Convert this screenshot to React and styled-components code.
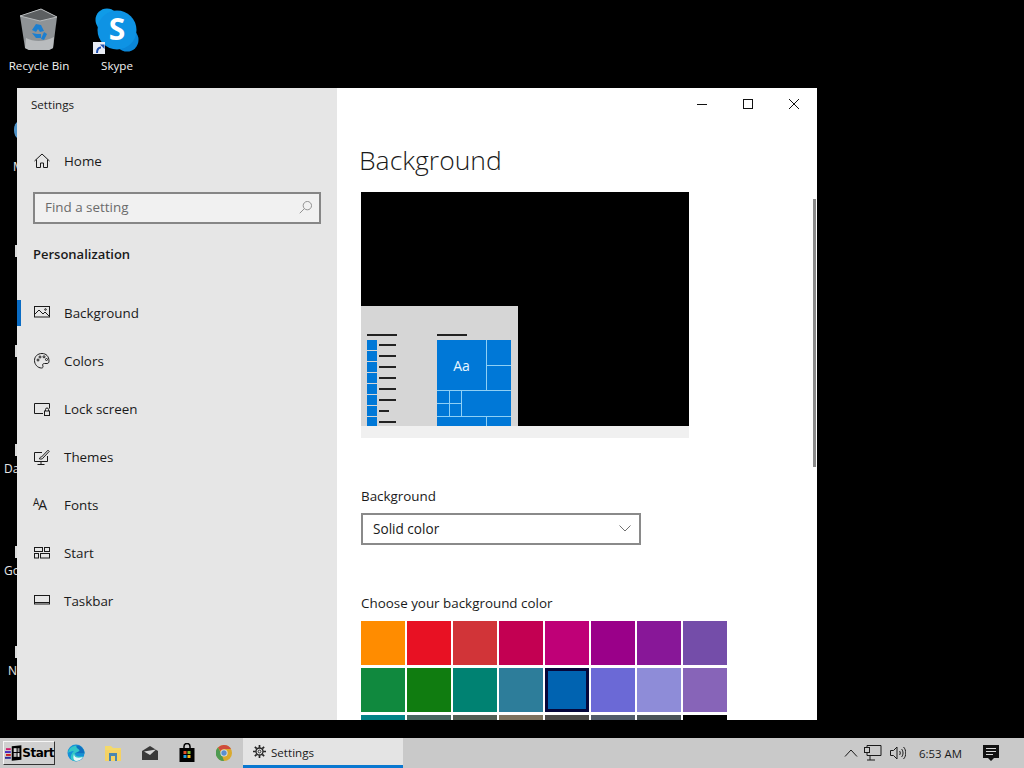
import React from 'react';
import styled, { createGlobalStyle } from 'styled-components';

const GlobalStyle = createGlobalStyle`
    html, body { margin: 0; padding: 0; background: #000; }
    body { font-family: "Open Sans", "Noto Sans", sans-serif; overflow: hidden; }
`;

const navItems = [
    { label: 'Background', icon: 'background', active: true },
    { label: 'Colors', icon: 'colors' },
    { label: 'Lock screen', icon: 'lock' },
    { label: 'Themes', icon: 'themes' },
    { label: 'Fonts', icon: 'fonts' },
    { label: 'Start', icon: 'start' },
    { label: 'Taskbar', icon: 'taskbar' },
];

const swatches = [
    '#ff8c00', '#e81123', '#d13438', '#c30052', '#bf0077', '#9a0089', '#881798', '#744da9',
    '#10893e', '#107c10', '#008272', '#2d7d9a', '#0063b1', '#6b69d6', '#8e8cd8', '#8764b8',
    '#038387', '#486860', '#525e54', '#7e735f', '#4c4a48', '#515c6b', '#4a5459', '#000000',
];

const hiddenIcons = [
    { top: 245, label: '' },
    { top: 345, label: '' },
    { top: 444, label: 'Da' },
    { top: 546, label: 'Go' },
    { top: 646, label: 'N' },
];

function NavIcon({ name }) {
    const common = { width: 18, height: 18, viewBox: '0 0 18 18', fill: 'none', stroke: '#1a1a1a', strokeWidth: 1 };
    if (name === 'background') return (
        <svg {...common}>
            <rect x="1.5" y="2.5" width="15" height="10.5" />
            <path d="M2 10l4-4 4 4 2-2 4 4" />
            <circle cx="12.5" cy="5.5" r=".8" />
        </svg>
    );
    if (name === 'colors') return (
        <svg {...common}>
            <path d="M9 1.5c-4.4 0-7.5 3-7.5 7s3.200 7.500 7 7.500c1.500 0 1.800-1 1.300-2.200-.6-1.400.2-2.300 1.700-2.300h2.500c1.300 0 2-.9 2-2.300C16 4.200 13 1.500 9 1.500z" />
            <circle cx="5" cy="8" r="1" />
            <circle cx="7" cy="5" r="1" />
            <circle cx="11" cy="4.800" r="1" />
            <circle cx="13.500" cy="7.500" r="1" />
        </svg>
    );
    if (name === 'lock') return (
        <svg {...common}>
            <path d="M10 13.500H1.500v-10h15v5" />
            <rect x="11.500" y="11" width="5" height="4.500" />
            <path d="M12.500 11V9.500a1.500 1.500 0 0 1 3 0V11" />
        </svg>
    );
    if (name === 'themes') return (
        <svg {...common}>
            <path d="M9 4.500H1.500v9h13V8" />
            <path d="M8 14v2.500M4.500 16.500h7" />
            <path d="M6.500 11c.2-1.500 1-2 2-2L15 2.200l1.200 1.200L10 10c-.3 1-1.800 1.200-3.500 1z" />
        </svg>
    );
    if (name === 'fonts') return (
        <FontsGlyph>
            <small>A</small>
            <span>A</span>
        </FontsGlyph>
    );
    if (name === 'start') return (
        <svg {...common}>
            <rect x="1.500" y="3.500" width="8" height="4" />
            <rect x="11.500" y="3.500" width="5" height="4" />
            <rect x="1.500" y="9.500" width="4" height="4.500" />
            <rect x="7.500" y="9.500" width="9" height="4.500" />
        </svg>
    );
    return (
        <svg {...common}>
            <rect x="1.500" y="3.500" width="15" height="8.500" />
            <path d="M1.500 10.500h15" />
        </svg>
    );
}

function SkypeIcon() {
    return (
        <svg width="44" height="44" viewBox="0 0 44 44">
            <circle cx="12" cy="12" r="11.500" fill="#0f9be8" />
            <circle cx="32" cy="32" r="11.500" fill="#0a86d8" />
            <circle cx="22" cy="22" r="19.500" fill="#0e93e4" />
            <text x="22" y="32" textAnchor="middle" fontFamily="Open Sans, sans-serif" fontWeight="700" fontSize="30" fill="#fff">S</text>
        </svg>
    );
}

function RecycleIcon() {
    return (
        <svg width="40" height="44" viewBox="0 0 40 44">
            <path d="M1 8L22 1l16 8-4 31-4 2H10l-4-2z" fill="#8f9396" />
            <path d="M1 8L22 1l16 8-17 4z" fill="#5c5f61" stroke="#b8bbbd" strokeWidth="1" />
            <path d="M7 30c8 4 18 4 28-1l-1 11-4 2H10l-4-2z" fill="#b9bcbe" />
            <path d="M13 22l4-6 5 1 3 6-4 1-2-3-2 3z M13 25l4 5h5v-4h-4z M25 24l3 2-3 6-3-1z" fill="#1c7fd0" />
        </svg>
    );
}

function ShortcutBadge() {
    return (
        <Badge>
            <svg width="11" height="11" viewBox="0 0 11 11" fill="none">
                <path d="M3 10c0-4 1-5.500 4-5.500" stroke="#1d4fb0" strokeWidth="2" />
                <path d="M6 1.500h4.500V6z" fill="#1d4fb0" />
            </svg>
        </Badge>
    );
}

function StartFlag() {
    return (
        <svg width="19" height="20" viewBox="0 0 18 18">
            <path d="M7 2l10-1v15l-10 1z" fill="#000" />
            <rect x="9" y="4" width="3" height="4" fill="#d8d8d8" />
            <rect x="13" y="4" width="2" height="4" fill="#9a9a9a" />
            <rect x="9" y="9" width="3" height="4" fill="#bbb" />
            <rect x="13" y="9" width="2" height="4" fill="#e8e8e8" />
            <rect x="1" y="4" width="5" height="2" fill="#d01c6a" />
            <rect x="0" y="7" width="6" height="2" fill="#4a2bc0" />
            <rect x="1" y="10" width="5" height="2" fill="#d01c1c" />
            <rect x="0" y="13" width="6" height="2" fill="#2a2a9a" />
        </svg>
    );
}

function EdgeIcon() {
    return (
        <svg width="18" height="18" viewBox="0 0 18 18">
            <circle cx="9" cy="9" r="8.500" fill="#1490d8" />
            <path d="M1 9C2 3 8 .500 13 2.500c3 1.200 4.500 4 4.500 7H8c0 2.500 3 4 8 2.500-2 5-8 6-11 4C2.500 14.500 4 9.500 7 7 4 7 2 8 1 9z" fill="#33c6c8" />
            <path d="M7.500 9.500h10c0-3-2-8-8-8-1 3 3 3 3 5.500z" fill="#0f6fc0" />
            <path d="M7 10c0 3 3 5 9 3-2 3-5 4-7 4-3-1-3-4-2-7z" fill="#e6f6f8" />
        </svg>
    );
}

function FolderIcon() {
    return (
        <svg width="18" height="18" viewBox="0 0 18 18">
            <path d="M1 2h6l2 2h8v3H1z" fill="#f4d96a" />
            <rect x="1" y="6" width="16" height="11" fill="#f5d265" />
            <path d="M5 9h8v8h-2v-5H7v5H5z" fill="#4a86b0" />
        </svg>
    );
}

function MailIcon() {
    return (
        <svg width="18" height="14" viewBox="0 0 18 14">
            <path d="M1 5L9 0l8 5v9H1z" fill="#3a3a3a" />
            <path d="M3 5.500L15 3.500 9 9z" fill="#d6d6d6" />
        </svg>
    );
}

function StoreIcon() {
    return (
        <svg width="18" height="20" viewBox="0 0 18 20" fill="none">
            <path d="M6 6V3.500a3 3 0 0 1 6 0V6" stroke="#000" strokeWidth="1.500" />
            <rect x="1.500" y="5" width="15" height="14" fill="#000" />
            <rect x="5.500" y="8" width="3" height="3" fill="#e2502a" />
            <rect x="9.500" y="8" width="3" height="3" fill="#7dbb2e" />
            <rect x="5.500" y="12" width="3" height="3" fill="#1d9fe0" />
            <rect x="9.500" y="12" width="3" height="3" fill="#f5b81c" />
        </svg>
    );
}

function ChromeIcon() {
    return (
        <svg width="16" height="16" viewBox="0 0 16 16">
            <circle cx="8" cy="8" r="8" fill="#d9a92e" />
            <path d="M8 0a8 8 0 0 1 7 4H8a4 4 0 0 0-3.500 2L2 2.500A8 8 0 0 1 8 0z" fill="#cf4b3d" />
            <path d="M2 2.500L5.500 9 8 16A8 8 0 0 1 2 2.500z" fill="#4e9a52" />
            <circle cx="8" cy="8" r="3.600" fill="#e4e4e4" />
            <circle cx="8" cy="8" r="2.700" fill="#5b8fd0" />
        </svg>
    );
}

function GearIcon() {
    return (
        <svg width="13" height="13" viewBox="0 0 14 14" fill="none" stroke="#262626">
            <circle cx="7" cy="7" r="3.800" strokeWidth="1.500" />
            <circle cx="7" cy="7" r="1.500" strokeWidth="1" />
            <path d="M7 0v3M7 11v3M0 7h3M11 7h3M2 2l2 2M10 10l2 2M12 2l-2 2M4 10l-2 2" strokeWidth="1.800" />
        </svg>
    );
}

export default function App() {
    return (
        <Page>
            <GlobalStyle />
            <Desktop>
                <DesktopIcon $left={0} $top={8}>
                    <RecycleIcon />
                    <DesktopLabel>Recycle Bin</DesktopLabel>
                </DesktopIcon>
                <DesktopIcon $left={78} $top={8}>
                    <SkypeIcon />
                    <ShortcutBadge />
                    <DesktopLabel>Skype</DesktopLabel>
                </DesktopIcon>

                <BlueFragment />
                <HiddenLabel $top={159} $left={13}>M</HiddenLabel>
                {hiddenIcons.map((item) => (
                    <React.Fragment key={item.top}>
                        <Sliver $top={item.top} />
                        {item.label && (
                            <HiddenLabel $top={item.top + 17} $left={item.label === 'N' ? 8 : 4}>{item.label}</HiddenLabel>
                        )}
                    </React.Fragment>
                ))}

                <Window>
                    <Sidebar>
                        <WindowTitle>Settings</WindowTitle>
                        <HomeRow>
                            <IconSlot>
                                <svg width="18" height="18" viewBox="0 0 18 18" fill="none" stroke="#1a1a1a">
                                    <path d="M1.500 9L9 2l7.500 7M3.500 7.500v8h4v-4.500h3v4.500h4v-8" />
                                </svg>
                            </IconSlot>
                            <NavText>Home</NavText>
                        </HomeRow>
                        <SearchBox>
                            <SearchHint>Find a setting</SearchHint>
                            <svg width="13" height="13" viewBox="0 0 14 14" fill="none" stroke="#8a8a8a">
                                <circle cx="9" cy="5" r="4.500" />
                                <path d="M5.800 8.200L.8 13.200" />
                            </svg>
                        </SearchBox>
                        <SectionTitle>Personalization</SectionTitle>
                        <NavList>
                            {navItems.map((item) => (
                                <NavRow key={item.label} $active={item.active}>
                                    <IconSlot><NavIcon name={item.icon} /></IconSlot>
                                    <NavText>{item.label}</NavText>
                                </NavRow>
                            ))}
                        </NavList>
                    </Sidebar>

                    <Content>
                        <Controls>
                            <ControlButton>
                                <svg width="10" height="10" viewBox="0 0 10 10" stroke="#111"><path d="M0 5.500h10" /></svg>
                            </ControlButton>
                            <ControlButton>
                                <svg width="10" height="10" viewBox="0 0 10 10" fill="none" stroke="#111"><rect x=".5" y=".5" width="9" height="9" /></svg>
                            </ControlButton>
                            <ControlButton>
                                <svg width="10" height="10" viewBox="0 0 10 10" stroke="#111"><path d="M0 0l10 10M10 0L0 10" /></svg>
                            </ControlButton>
                        </Controls>
                        <Heading>Background</Heading>
                        <Preview>
                            <PreviewScreen>
                                <StartMock>
                                    <MockList>
                                        <MockLine $width={30} />
                                        <MockRows>
                                            {[17, 17, 17, 17, 17, 17, 10, 17].map((w, i) => (
                                                <MockRow key={i}>
                                                    <MockTile />
                                                    <MockLine $width={w} />
                                                </MockRow>
                                            ))}
                                        </MockRows>
                                    </MockList>
                                    <MockList>
                                        <MockLine $width={30} />
                                        <TileGrid>
                                            <Tile $col="1 / 4" $row="1 / 3">Aa</Tile>
                                            <Tile $col="4" $row="1" />
                                            <Tile $col="4" $row="2" />
                                            <Tile $col="1" $row="3" />
                                            <Tile $col="2" $row="3" />
                                            <Tile $col="1" $row="4" />
                                            <Tile $col="2" $row="4" />
                                            <Tile $col="3 / 5" $row="3 / 5" />
                                            <Tile $col="1 / 4" $row="5" />
                                            <Tile $col="4" $row="5" />
                                        </TileGrid>
                                    </MockList>
                                </StartMock>
                            </PreviewScreen>
                            <PreviewStrip />
                        </Preview>
                        <FieldLabel>Background</FieldLabel>
                        <SelectBox>
                            <span>Solid color</span>
                            <svg width="12" height="7" viewBox="0 0 12 7" fill="none" stroke="#707070"><path d="M.5.5L6 6 11.500.5" /></svg>
                        </SelectBox>
                        <FieldLabel>Choose your background color</FieldLabel>
                        <SwatchGrid>
                            {swatches.map((color, i) => (
                                <Swatch key={i} $selected={i === 12} style={{ background: color }} />
                            ))}
                        </SwatchGrid>
                        <ScrollThumb />
                    </Content>
                </Window>
            </Desktop>

            <Taskbar>
                <StartButton>
                    <StartFlag />
                    <span>Start</span>
                </StartButton>
                <PinnedApps>
                    <PinnedSlot $w={36}><EdgeIcon /></PinnedSlot>
                    <PinnedSlot $w={37}><FolderIcon /></PinnedSlot>
                    <PinnedSlot $w={37}><MailIcon /></PinnedSlot>
                    <PinnedSlot $w={37}><StoreIcon /></PinnedSlot>
                    <PinnedSlot $w={37}><ChromeIcon /></PinnedSlot>
                </PinnedApps>
                <TaskTab>
                    <GearIcon />
                    <TabLabel>Settings</TabLabel>
                </TaskTab>
                <Tray>
                    <svg width="14" height="8" viewBox="0 0 14 8" fill="none" stroke="#1a1a1a"><path d="M1 7.500L7 1l6 6.500" /></svg>
                    <svg width="18" height="16" viewBox="0 0 18 16" fill="none" stroke="#1a1a1a">
                        <path d="M3 3.500V.5h14v10H3V7" />
                        <rect x=".5" y="2.500" width="5" height="5" fill="#c9c9c9" />
                        <path d="M6 10.500V15M3 15h8" />
                    </svg>
                    <svg width="16" height="14" viewBox="0 0 16 14" fill="none" stroke="#1a1a1a">
                        <path d="M.5 4.500h3L7 1v12L3.500 9.500h-3z" />
                        <path d="M9.500 5c1 1 1 3 0 4M11.500 3c2 2 2 6 0 8M13.500 1c3 3 3 9 0 12" />
                    </svg>
                    <Clock>6:53 AM</Clock>
                    <svg width="16" height="16" viewBox="0 0 16 16">
                        <path d="M0 0h16v13h-5l-3 3-3-3H0z" fill="#111" />
                        <path d="M3 3.500h10M3 6.500h10M3 9.500h7" stroke="#d8d8d8" />
                    </svg>
                </Tray>
            </Taskbar>
        </Page>
    );
}

const Page = styled.div`
    width: 1024px;
    height: 768px;
    display: flex;
    flex-direction: column;
    background: #000;
    overflow: hidden;
`;

const Desktop = styled.div`
    flex: 1;
    position: relative;
`;

const DesktopIcon = styled.div`
    position: absolute;
    left: ${({ $left }) => $left}px;
    top: ${({ $top }) => $top}px;
    width: 78px;
    display: flex;
    flex-direction: column;
    align-items: center;
    gap: 6px;
`;

const DesktopLabel = styled.span`
    color: #f2f2f2;
    font-size: 11.600px;
    line-height: 16px;
`;

const Badge = styled.div`
    position: absolute;
    left: 15px;
    top: 34px;
    width: 12px;
    height: 12px;
    background: #e8ecf4;
    display: flex;
    align-items: center;
    justify-content: center;
`;

const BlueFragment = styled.div`
    position: absolute;
    left: 14px;
    top: 122px;
    width: 8px;
    height: 16px;
    border-radius: 50%;
    background: #4f93c8;
`;

const Sliver = styled.div`
    position: absolute;
    left: 15px;
    top: ${({ $top }) => $top}px;
    width: 4px;
    height: 12px;
    background: #dcdcdc;
`;

const HiddenLabel = styled.span`
    position: absolute;
    left: ${({ $left }) => $left}px;
    top: ${({ $top }) => $top}px;
    color: #e8e8e8;
    font-size: 12px;
    line-height: 16px;
`;

const Window = styled.div`
    position: absolute;
    left: 17px;
    top: 88px;
    width: 800px;
    height: 632px;
    display: flex;
    overflow: hidden;
    background: #fff;
`;

const Sidebar = styled.aside`
    width: 320px;
    flex: none;
    background: #e6e6e6;
    display: flex;
    flex-direction: column;
    color: #1a1a1a;
`;

const WindowTitle = styled.div`
    height: 32px;
    padding: 1px 0 0 14px;
    box-sizing: border-box;
    font-size: 11.600px;
    line-height: 32px;
`;

const HomeRow = styled.div`
    height: 48px;
    margin-top: 17px;
    display: flex;
    align-items: center;
    padding-left: 16px;
`;

const IconSlot = styled.span`
    width: 31px;
    flex: none;
    display: flex;
    align-items: center;
`;

const NavText = styled.span`
    font-size: 13.400px;
    line-height: 20px;
    color: #1a1a1a;
`;

const FontsGlyph = styled.span`
    display: flex;
    align-items: flex-start;
    width: 18px;
    height: 18px;
    color: #1a1a1a;
    line-height: 14px;
    small {
        font-size: 10px;
        margin-top: -1px;
    }
    span {
        font-size: 14px;
        margin: 2px 0 0 -1px;
    }
`;

const SearchBox = styled.div`
    box-sizing: border-box;
    margin: 7px 16px 0;
    height: 32px;
    width: 288px;
    border: 2px solid #868686;
    background: #f1f1f1;
    display: flex;
    align-items: center;
    justify-content: space-between;
    padding: 0 7px 2px 10px;
`;

const SearchHint = styled.span`
    font-size: 13.400px;
    color: #6b6b6b;
`;

const SectionTitle = styled.div`
    margin: 20px 0 0 16px;
    font-size: 13px;
    line-height: 20px;
    font-weight: 600;
    color: #1a1a1a;
`;

const NavList = styled.nav`
    margin-top: 25px;
    display: flex;
    flex-direction: column;
`;

const NavRow = styled.div`
    height: 48px;
    display: flex;
    align-items: center;
    padding-left: 16px;
    position: relative;
    &::before {
        content: "";
        display: ${({ $active }) => ($active ? 'block' : 'none')};
        position: absolute;
        left: 0;
        top: 11px;
        width: 4px;
        height: 26px;
        background: #0a6cc4;
    }
`;

const Content = styled.main`
    flex: 1;
    position: relative;
    display: flex;
    flex-direction: column;
    padding-left: 24px;
    color: #1a1a1a;
`;

const Controls = styled.div`
    height: 32px;
    flex: none;
    display: flex;
    justify-content: flex-end;
`;

const ControlButton = styled.div`
    width: 46px;
    display: flex;
    align-items: center;
    justify-content: center;
`;

const Heading = styled.h1`
    margin: 20px 0 0 -2px;
    height: 40px;
    flex: none;
    font-size: 26.500px;
    line-height: 40px;
    font-weight: 300;
    color: #1a1a1a;
`;

const Preview = styled.div`
    margin-top: 12px;
    width: 328px;
    flex: none;
`;

const PreviewScreen = styled.div`
    height: 234px;
    background: #000;
    display: flex;
    align-items: flex-end;
`;

const PreviewStrip = styled.div`
    height: 12px;
    background: #f0f0f0;
`;

const StartMock = styled.div`
    box-sizing: border-box;
    width: 157px;
    height: 120px;
    padding: 28px 0 0 6px;
    background: #d6d6d6;
    display: flex;
    gap: 40px;
    overflow: hidden;
`;

const MockList = styled.div`
    display: flex;
    flex-direction: column;
    gap: 4px;
`;

const MockLine = styled.div`
    width: ${({ $width }) => $width}px;
    height: 2px;
    background: #222;
    flex: none;
`;

const MockRows = styled.div`
    display: flex;
    flex-direction: column;
    gap: 1px;
`;

const MockRow = styled.div`
    height: 10px;
    display: flex;
    align-items: center;
    gap: 2px;
`;

const MockTile = styled.div`
    width: 10px;
    height: 10px;
    background: #0078d7;
`;

const TileGrid = styled.div`
    display: grid;
    grid-template-columns: 12px 11px 24px 24px;
    grid-template-rows: 25px 24px 12px 12px 9px;
    gap: 1px;
    background: #8fd0f5;
`;

const Tile = styled.div`
    grid-column: ${({ $col }) => $col};
    grid-row: ${({ $row }) => $row};
    background: #0078d7;
    color: #e8f6ff;
    font-size: 14px;
    display: flex;
    align-items: center;
    justify-content: center;
`;

const FieldLabel = styled.div`
    margin-top: 48px;
    height: 20px;
    flex: none;
    font-size: 13.400px;
    line-height: 20px;
`;

const SelectBox = styled.div`
    box-sizing: border-box;
    margin-top: 7px;
    width: 280px;
    height: 32px;
    border: 2px solid #8a8a8a;
    display: flex;
    align-items: center;
    justify-content: space-between;
    padding: 0 8px 2px 10px;
    font-size: 13.600px;
    flex: none;
`;

const SwatchGrid = styled.div`
    margin-top: 8px;
    flex: none;
    display: grid;
    grid-template-columns: repeat(8, 44px);
    grid-auto-rows: 44px;
    column-gap: 2px;
    row-gap: 3px;
`;

const Swatch = styled.div`
    box-sizing: border-box;
    border: ${({ $selected }) => ($selected ? '3px solid #06063a' : 'none')};
`;

const ScrollThumb = styled.div`
    position: absolute;
    right: 1px;
    top: 111px;
    width: 3px;
    height: 268px;
    background: #8a8a8a;
`;

const Taskbar = styled.footer`
    height: 30px;
    flex: none;
    background: #c9c9c9;
    display: flex;
    align-items: center;
    color: #1a1a1a;
`;

const StartButton = styled.div`
    box-sizing: border-box;
    margin-left: 3px;
    width: 52px;
    height: 24px;
    background: #d0d0d0;
    border: 1px solid;
    border-color: #f6f6f6 #333 #333 #f6f6f6;
    display: flex;
    align-items: center;
    gap: 0;
    padding-left: 1px;
    font-family: "DejaVu Sans", sans-serif;
    font-size: 12px;
    font-weight: 700;
    color: #000;
    letter-spacing: -0.5px;
`;

const PinnedApps = styled.div`
    display: flex;
    margin-left: 3px;
`;

const PinnedSlot = styled.div`
    width: ${({ $w }) => $w}px;
    height: 30px;
    display: flex;
    align-items: center;
    justify-content: center;
`;

const TaskTab = styled.div`
    box-sizing: border-box;
    width: 160px;
    height: 30px;
    margin-left: 1px;
    padding-left: 10px;
    display: flex;
    align-items: center;
    gap: 5px;
    background: #e4e4e4;
    border-bottom: 3px solid #0a78d0;
    font-size: 11.600px;
`;

const TabLabel = styled.span`
    margin-top: 2px;
`;

const Tray = styled.div`
    margin-left: auto;
    display: flex;
    align-items: center;
    gap: 8px;
    padding-right: 25px;
    & > svg:first-child {
        margin-right: -2px;
    }
`;

const Clock = styled.span`
    font-size: 11.400px;
    margin: 0 13px 0 5px;
`;
